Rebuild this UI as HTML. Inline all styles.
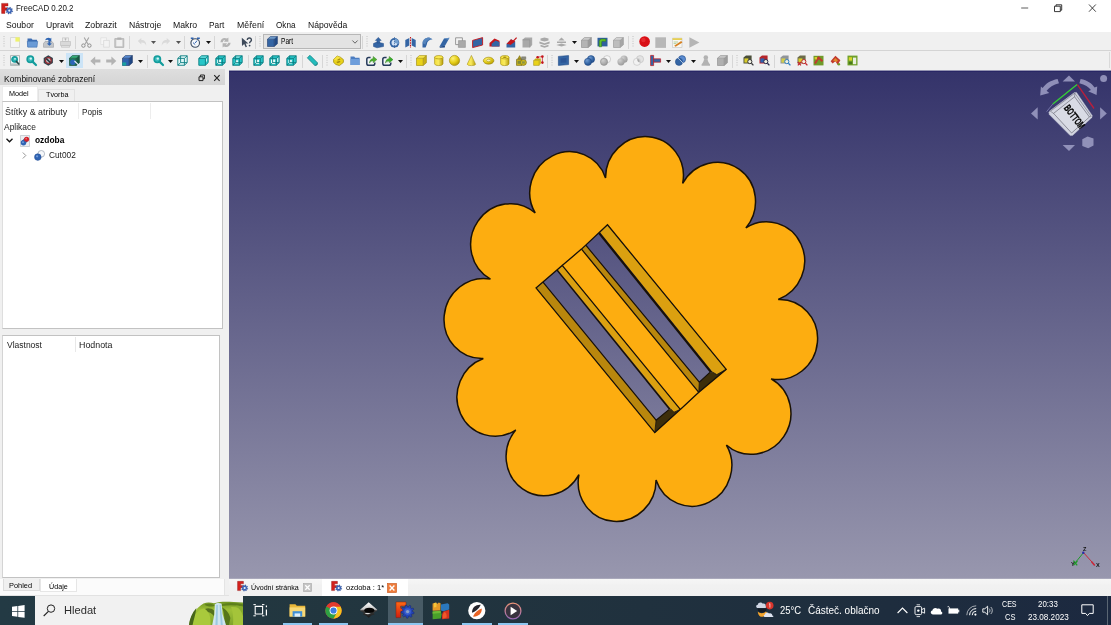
<!DOCTYPE html>
<html><head><meta charset="utf-8"><title>FreeCAD 0.20.2</title>
<style>
html,body{margin:0;padding:0;}
body{width:1111px;height:625px;overflow:hidden;position:relative;background:#f0f0f0;font-family:"Liberation Sans",sans-serif;}
.b{position:absolute;}
.t{position:absolute;white-space:nowrap;transform-origin:0 50%;}
svg{position:absolute;overflow:visible;}
</style></head><body>
<div class="b" style="left:0px;top:0px;width:1111px;height:32px;background:#fff;"></div>
<div class="b" style="left:0px;top:32px;width:1111px;height:38px;background:#f0f0f0;"></div>
<div class="b" style="left:0px;top:50px;width:1111px;height:1px;background:#d4d4d4;"></div>
<div class="b" style="left:0px;top:69px;width:229px;height:527px;background:#f0f0f0;"></div>
<div class="b" style="left:229px;top:579px;width:882px;height:17px;background:linear-gradient(#f6f6f6,#f1f1f1 40%,#f0f0f0);"></div>
<svg style="left:0.8px;top:2.8px" width="13" height="13" viewBox="0 0 13 13">
<path d="M0.6,0.4H7V3H3.9V4.8H6V7.2H3.9V10.4H0.6Z" fill="#d3201c" stroke="#8a1010" stroke-width="0.4"/><path d="M10.80,7.60L11.77,8.09L11.53,8.94L10.45,8.87L10.07,9.37L10.40,10.40L9.64,10.83L8.92,10.02L8.30,10.10L7.81,11.07L6.96,10.83L7.03,9.75L6.53,9.37L5.50,9.70L5.07,8.94L5.88,8.22L5.80,7.60L4.83,7.11L5.07,6.26L6.15,6.33L6.53,5.83L6.20,4.80L6.96,4.37L7.68,5.18L8.30,5.10L8.79,4.13L9.64,4.37L9.57,5.45L10.07,5.83L11.10,5.50L11.53,6.26L10.72,6.98Z" fill="#3a64b8" stroke="#27468a" stroke-width="0.35"/><circle cx="8.3" cy="7.6" r="1.1" fill="#eef2fa"/></svg>
<div class="t" style="left:15.6px;top:2.1px;font-size:9px;line-height:13px;color:#111;transform:scaleX(0.884);">FreeCAD 0.20.2</div>
<svg style="left:1015px;top:0" width="96" height="17" viewBox="0 0 96 17">
<path d="M6.2,8H13.2" stroke="#333" stroke-width="0.8" fill="none"/>
<path d="M39.5,6.2H45.3V11.6H39.5Z M41,6.2V4.8H46.7V10.2H45.3" stroke="#222" stroke-width="0.9" fill="none"/>
<path d="M74,4.5L80.8,11.7 M80.8,4.5L74,11.7" stroke="#222" stroke-width="0.85" fill="none"/></svg>
<div class="t" style="left:5.8px;top:18.8px;font-size:9.3px;line-height:13px;color:#111;transform:scaleX(0.927);">Soubor</div>
<div class="t" style="left:46.0px;top:18.8px;font-size:9.3px;line-height:13px;color:#111;transform:scaleX(0.927);">Upravit</div>
<div class="t" style="left:85.3px;top:18.8px;font-size:9.3px;line-height:13px;color:#111;transform:scaleX(0.944);">Zobrazit</div>
<div class="t" style="left:128.8px;top:18.8px;font-size:9.3px;line-height:13px;color:#111;transform:scaleX(0.930);">Nástroje</div>
<div class="t" style="left:173.3px;top:18.8px;font-size:9.3px;line-height:13px;color:#111;transform:scaleX(0.937);">Makro</div>
<div class="t" style="left:209.3px;top:18.8px;font-size:9.3px;line-height:13px;color:#111;transform:scaleX(0.891);">Part</div>
<div class="t" style="left:236.8px;top:18.8px;font-size:9.3px;line-height:13px;color:#111;transform:scaleX(0.940);">Měření</div>
<div class="t" style="left:276.0px;top:18.8px;font-size:9.3px;line-height:13px;color:#111;transform:scaleX(0.877);">Okna</div>
<div class="t" style="left:307.7px;top:18.8px;font-size:9.3px;line-height:13px;color:#111;transform:scaleX(0.927);">Nápověda</div>
<svg style="left:0;top:0" width="0" height="0"><defs><radialGradient id="yr" cx="0.35" cy="0.3" r="0.75"><stop offset="0" stop-color="#fdf07a"/><stop offset="0.55" stop-color="#e6cf18"/><stop offset="1" stop-color="#b09608"/></radialGradient><linearGradient id="yh" x1="0" y1="0" x2="1" y2="0"><stop offset="0" stop-color="#f3df3a"/><stop offset="0.45" stop-color="#f9ea5e"/><stop offset="1" stop-color="#b89e0c"/></linearGradient><radialGradient id="br" cx="0.35" cy="0.3" r="0.8"><stop offset="0" stop-color="#6f9bd1"/><stop offset="0.6" stop-color="#3465a4"/><stop offset="1" stop-color="#204a87"/></radialGradient><radialGradient id="gr" cx="0.35" cy="0.3" r="0.8"><stop offset="0" stop-color="#d0d0d0"/><stop offset="1" stop-color="#979797"/></radialGradient></defs></svg>
<svg style="left:3.0px;top:35.0px" width="2" height="14" viewBox="0 0 2 14"><path d="M1,1V13" stroke="#b0b0b0" stroke-width="0.8" stroke-dasharray="0.9 1.5"/></svg>
<svg style="left:10.0px;top:36.5px" width="11" height="11" viewBox="0 0 11 11"><path d="M0.5,0.5H9.5V10.5H0.5Z" fill="#f5f5f5" stroke="#d0d0d0" stroke-width="0.8"/><path d="M5.4,0.3H9.7V4.6H5.400Z" fill="#eef26c"/></svg>
<svg style="left:26.6px;top:36.5px" width="11" height="11" viewBox="0 0 11 11"><path d="M0.5,1.5H4.5L5.5,2.8H10V10H0.5Z" fill="#3f6fb4"/><path d="M0.3,4.2H10.7L10,10.2H0.8Z" fill="#6a9bd6" stroke="#3466aa" stroke-width="0.5"/></svg>
<svg style="left:43.0px;top:36.5px" width="11" height="11" viewBox="0 0 11 11"><path d="M0.5,6.5L2,4.5H9L10.5,6.5V10.3H0.5Z" fill="#c3c6ca" stroke="#9a9da2" stroke-width="0.6"/><path d="M2.2,3.2C3,0.8 6,0.2 7.4,1.6L8.3,0.7V4.3H4.7L5.8,3.2C5,2.4 3.6,2.5 2.2,3.2Z M5.4,4V6.6H3.8L6.4,8.8L9,6.6H7.4V4Z" fill="#2d64b3"/></svg>
<svg style="left:60.0px;top:36.5px" width="11" height="11" viewBox="0 0 11 11"><path d="M2.5,0.8H8.5V4.5H2.5Z" fill="#ececec" stroke="#bdbdbd" stroke-width="0.6"/><path d="M0.5,4.5H10.5V8.6H0.5Z" fill="#d9d9d9" stroke="#bcbcbc" stroke-width="0.6"/><path d="M1.5,8.6H9.5V10.3H1.5Z" fill="#e4e4e4" stroke="#b5b5b5" stroke-width="0.5"/><path d="M4.5,2H6.5M5.5,1.5V3.5" stroke="#aaa" stroke-width="0.7"/></svg>
<div class="b" style="left:75px;top:36px;width:1px;height:13px;background:#d6d6d6;"></div>
<svg style="left:81.0px;top:36.5px" width="11" height="11" viewBox="0 0 11 11"><path d="M3.2,0.5L7,7.3M7.8,0.5L4,7.3" stroke="#a3a3a3" stroke-width="1.1" fill="none"/><circle cx="2.4" cy="8.6" r="1.7" fill="none" stroke="#8e8e8e" stroke-width="1"/><circle cx="8.4" cy="8.6" r="1.7" fill="none" stroke="#8e8e8e" stroke-width="1"/></svg>
<svg style="left:99.5px;top:36.5px" width="11" height="11" viewBox="0 0 11 11"><path d="M0.8,0.8H6.5V7.5H0.8Z" fill="#f6f6f6" stroke="#dedede" stroke-width="0.7"/><path d="M3.6,3.4H9.4V10.2H3.6Z" fill="#f3f3f3" stroke="#d6d6d6" stroke-width="0.7"/></svg>
<svg style="left:114.0px;top:36.5px" width="11" height="11" viewBox="0 0 11 11"><path d="M0.8,1.6H9.8V10.4H0.8Z" fill="#c9c9c9" stroke="#a7a7a7" stroke-width="0.7"/><path d="M2.3,3H8.3V9.2H2.3Z" fill="#f0f0f0"/><path d="M3.3,0.5H7.3V2.6H3.3Z" fill="#b0b0b0"/></svg>
<div class="b" style="left:129px;top:36px;width:1px;height:13px;background:#d6d6d6;"></div>
<svg style="left:137.0px;top:36.5px" width="10" height="10" viewBox="0 0 10 10"><path d="M0.8,4L4.3,1V3C7.5,3 9.4,5 9.2,8.8C8.5,6.6 7,5.6 4.3,5.6V7.4Z" fill="#dadada"/></svg>
<svg style="left:151.2px;top:41.0px" width="5" height="3" viewBox="0 0 5 3"><path d="M0,0H5L2.5,3Z" fill="#555"/></svg>
<svg style="left:161.0px;top:36.5px" width="10" height="10" viewBox="0 0 10 10"><path d="M9.2,4L5.7,1V3C2.5,3 0.6,5 0.8,8.8C1.5,6.6 3,5.6 5.7,5.6V7.4Z" fill="#dadada"/></svg>
<svg style="left:176.0px;top:41.0px" width="5" height="3" viewBox="0 0 5 3"><path d="M0,0H5L2.5,3Z" fill="#555"/></svg>
<div class="b" style="left:184px;top:36px;width:1px;height:13px;background:#d6d6d6;"></div>
<svg style="left:190.0px;top:36.5px" width="11" height="11" viewBox="0 0 11 11"><circle cx="5.2" cy="6" r="4.3" fill="#f4f7fb" stroke="#3e4d63" stroke-width="1.1"/><path d="M5.2,6L7,3.6M3,5.6L5.2,7.6" stroke="#2f62b0" stroke-width="1" fill="none"/><path d="M0.8,1.2H3.5M7,1.2H9.8" stroke="#2f62b0" stroke-width="1.4"/></svg>
<svg style="left:206.0px;top:41.0px" width="5" height="3" viewBox="0 0 5 3"><path d="M0,0H5L2.5,3Z" fill="#111"/></svg>
<div class="b" style="left:214px;top:36px;width:1px;height:13px;background:#d6d6d6;"></div>
<svg style="left:220.0px;top:36.5px" width="11" height="11" viewBox="0 0 11 11"><path d="M0.4,5.2C0.6,1.6 4.2,0 7,1.6L8.4,0.4V4.8H3.8L5.2,3.6C4,3 3,3.6 3,5.2Z M10.6,5.8C10.4,9.4 6.8,11 4,9.4L2.6,10.6V6.2H7.2L5.8,7.4C7,8 8,7.4 8,5.8Z" fill="#b4b4b4"/></svg>
<svg style="left:240.5px;top:36.5px" width="11" height="11" viewBox="0 0 11 11"><path d="M0.8,0.8L1,9L3.2,7L4.6,10.3L6,9.7L4.6,6.5H7.4Z" fill="#3e4a5a"/><path d="M6.3,3C6.4,0.4 10.6,0.4 10.4,3.1C10.3,4.6 8.6,4.6 8.6,6.3" fill="none" stroke="#3e4a5a" stroke-width="1.4"/><circle cx="8.6" cy="8.6" r="0.9" fill="#3e4a5a"/></svg>
<div class="b" style="left:255px;top:36px;width:1px;height:13px;background:#d6d6d6;"></div>
<svg style="left:258.5px;top:35.0px" width="2" height="14" viewBox="0 0 2 14"><path d="M1,1V13" stroke="#b0b0b0" stroke-width="0.8" stroke-dasharray="0.9 1.5"/></svg>
<div class="b" style="left:263px;top:34px;width:98px;height:14.6px;background:#e3e3e3;border:1px solid #b7b7b7;box-sizing:border-box;"></div>
<svg style="left:267.0px;top:36.0px" width="11" height="11" viewBox="0 0 11 11"><path d="M0.5,3.2L7.2,3.2L7.2,10.5L0.5,10.5Z" fill="#3465a4"/><path d="M0.5,3.2L3.4,0.6L10.4,0.6L7.2,3.2Z" fill="#729fcf"/><path d="M7.2,3.2L10.4,0.6L10.4,7.8L7.2,10.5Z" fill="#204a87"/><path d="M0.5,3.2H7.2V10.5H0.5ZM0.5,3.2L3.4,0.6H10.4V7.8L7.2,10.5M7.2,3.2L10.4,0.6" fill="none" stroke="#1d3a6e" stroke-width="0.6"/></svg>
<div class="t" style="left:280.6px;top:35.4px;font-size:9.2px;line-height:13px;color:#000;transform:scaleX(0.717);">Part</div>
<svg style="left:351.5px;top:40.2px" width="6" height="4" viewBox="0 0 6 4"><path d="M0.4,0.5L3,3.2L5.6,0.5" fill="none" stroke="#444" stroke-width="0.8"/></svg>
<div class="b" style="left:362px;top:36px;width:1px;height:13px;background:#d6d6d6;"></div>
<svg style="left:365.6px;top:35.0px" width="2" height="14" viewBox="0 0 2 14"><path d="M1,1V13" stroke="#b0b0b0" stroke-width="0.8" stroke-dasharray="0.9 1.5"/></svg>
<svg style="left:372.5px;top:36.5px" width="11" height="11" viewBox="0 0 11 11"><path d="M0.5,6.5L4,5L10.5,6.5V9.5L4,10.8L0.5,9.5Z" fill="#3465a4" stroke="#204a87" stroke-width="0.5"/><path d="M5.3,0.4L8.2,3.4H6.6V6H4V3.4H2.4Z" fill="#3465a4" stroke="#204a87" stroke-width="0.5"/></svg>
<svg style="left:388.6px;top:36.5px" width="11" height="11" viewBox="0 0 11 11"><circle cx="5.5" cy="5.8" r="4.8" fill="#3465a4"/><circle cx="5.5" cy="5.8" r="3" fill="#cfe0f5"/><path d="M5.5,5.8V1.5A4.3,4.3 0 0 1 9.6,7Z" fill="#729fcf"/><path d="M5.5,0V11" stroke="#204a87" stroke-width="0.6" stroke-dasharray="1.2 0.8"/></svg>
<svg style="left:405.0px;top:36.5px" width="11" height="11" viewBox="0 0 11 11"><path d="M0.3,3L4.3,1V8.5L0.3,10.5Z" fill="#3465a4"/><path d="M6.7,1L10.7,3V10.5L6.7,8.5Z" fill="#3465a4"/><path d="M5.5,0V11" stroke="#c4161c" stroke-width="1.1" stroke-dasharray="1.6 1"/></svg>
<svg style="left:422.0px;top:36.5px" width="11" height="11" viewBox="0 0 11 11"><path d="M0.5,10.5V6C0.8,2.6 3.6,0.7 7.2,0.6L10.5,2.2C7.2,2.4 5.2,4 4.8,7.6L3.6,10.5Z" fill="#3465a4"/><path d="M0.5,6C0.8,2.6 3.6,0.7 7.2,0.6L10.5,2.2C6,2.2 3.6,4.2 3.6,7.8Z" fill="#729fcf" opacity="0.55"/></svg>
<svg style="left:439.0px;top:36.5px" width="11" height="11" viewBox="0 0 11 11"><path d="M0.5,9.5L5,1.5L10.5,0.8L6,8.8Z" fill="#3465a4"/><path d="M0.5,9.5L6,8.8L5.8,10.5L0.8,10.8Z" fill="#204a87"/><path d="M5,1.5L10.5,0.8L9.3,2.8Z" fill="#729fcf" opacity="0.7"/></svg>
<svg style="left:455.4px;top:36.5px" width="11" height="11" viewBox="0 0 11 11"><path d="M0.6,0.8H7.4V7.6H0.6Z" fill="#f4f4f4" stroke="#8e8e8e" stroke-width="0.9"/><path d="M3.4,3.6H10.4V10.4H3.4Z" fill="#a9a9a9" stroke="#8e8e8e" stroke-width="0.6"/></svg>
<svg style="left:471.6px;top:36.5px" width="11.5" height="11" viewBox="0 0 11.5 11"><path d="M0.6,3.4L10.6,0.6V8L0.6,10.6Z" fill="#3465a4" stroke="#c4161c" stroke-width="0.9"/></svg>
<svg style="left:489.0px;top:36.5px" width="11" height="11" viewBox="0 0 11 11"><path d="M0.5,6L5.5,1.4L10.5,3.8V9.6H0.5Z" fill="#c4161c"/><path d="M2.6,6.8L6.6,3.6L10.5,5V9.6H2.6Z" fill="#3465a4"/></svg>
<svg style="left:505.5px;top:36.5px" width="11" height="11" viewBox="0 0 11 11"><path d="M0.5,7L5,2.2L9.2,4.6V10.4H0.5Z" fill="#3465a4"/><path d="M0.5,7L5,2.2L9.2,4.6L5,7.4Z" fill="#c4161c"/><path d="M4,7.6L10.6,0.6" stroke="#c4161c" stroke-width="1.3"/></svg>
<svg style="left:522.0px;top:36.5px" width="11" height="11" viewBox="0 0 11 11"><path d="M0.5,2.8L3,0.6H10.2V8L7.8,10.4H0.5Z" fill="#a9a9a9"/><path d="M0.5,2.8H7.8V10.4" fill="none" stroke="#8c8c8c" stroke-width="0.6"/></svg>
<svg style="left:539.0px;top:36.5px" width="11" height="11" viewBox="0 0 11 11"><path d="M1.5,1.6L5.5,0.4L9.5,1.6V3.4L5.5,4.6L1.5,3.4ZM0.4,4.6L5.5,6.2L10.6,4.6V6.4L5.5,8L0.4,6.4ZM1.5,7.8L5.5,9L9.5,7.8V9.6L5.5,10.8L1.5,9.6Z" fill="#a9a9a9"/></svg>
<svg style="left:555.6px;top:36.5px" width="11" height="11" viewBox="0 0 11 11"><path d="M5.5,0.4L8.6,3.4H2.4ZM1,4.6H10V6H1ZM0.3,8L5.5,6.6L10.7,8L5.5,9.6Z" fill="#a9a9a9"/></svg>
<svg style="left:571.5px;top:41.0px" width="5" height="3" viewBox="0 0 5 3"><path d="M0,0H5L2.5,3Z" fill="#111"/></svg>
<svg style="left:581.0px;top:36.5px" width="11" height="11" viewBox="0 0 11 11"><path d="M0.5,3.2L7.2,3.2L7.2,10.5L0.5,10.5Z" fill="#b4b4b4"/><path d="M0.5,3.2L3.4,0.6L10.4,0.6L7.2,3.2Z" fill="#cdcdcd"/><path d="M7.2,3.2L10.4,0.6L10.4,7.8L7.2,10.5Z" fill="#9a9a9a"/><path d="M0.5,3.2H7.2V10.5H0.5ZM0.5,3.2L3.4,0.6H10.4V7.8L7.2,10.5M7.2,3.2L10.4,0.6" fill="none" stroke="#8a8a8a" stroke-width="0.6"/></svg>
<svg style="left:597.0px;top:36.5px" width="11" height="11" viewBox="0 0 11 11"><path d="M0.5,0.8H10.5V9.4H0.5Z" fill="#2f5f9e"/><path d="M2.2,9.8V4.6C2.2,2.4 4,2 5.6,2H8.8V4.2H5.8C4.8,4.2 4.6,4.6 4.6,5.4V9.8Z" fill="#5fbf2a" stroke="#2f7a12" stroke-width="0.5"/></svg>
<svg style="left:613.4px;top:36.5px" width="11" height="11" viewBox="0 0 11 11"><path d="M0.5,3.2L7.2,3.2L7.2,10.5L0.5,10.5Z" fill="#bdbdbd"/><path d="M0.5,3.2L3.4,0.6L10.4,0.6L7.2,3.2Z" fill="#d6d6d6"/><path d="M7.2,3.2L10.4,0.6L10.4,7.8L7.2,10.5Z" fill="#a6a6a6"/><path d="M0.5,3.2H7.2V10.5H0.5ZM0.5,3.2L3.4,0.6H10.4V7.8L7.2,10.5M7.2,3.2L10.4,0.6" fill="none" stroke="#949494" stroke-width="0.6"/></svg>
<div class="b" style="left:628px;top:36px;width:1px;height:13px;background:#d6d6d6;"></div>
<svg style="left:631.8px;top:35.0px" width="2" height="14" viewBox="0 0 2 14"><path d="M1,1V13" stroke="#b0b0b0" stroke-width="0.8" stroke-dasharray="0.9 1.5"/></svg>
<svg style="left:639.2px;top:36.3px" width="11.4" height="11.4" viewBox="0 0 11.4 11.4"><circle cx="5.6" cy="5.6" r="5.3" fill="#d90f16"/><circle cx="4.4" cy="4" r="2.2" fill="#ee3a3f" opacity="0.6"/></svg>
<svg style="left:655.2px;top:36.5px" width="11.3" height="11.2" viewBox="0 0 11.3 11.2"><path d="M0.3,0.3H11V10.9H0.3Z" fill="#b7b7b7"/></svg>
<svg style="left:672.3px;top:36.5px" width="11" height="11" viewBox="0 0 11 11"><path d="M0.5,1.2H10V10.5H0.5Z" fill="#f7f7f2" stroke="#c5c5c0" stroke-width="0.6"/><path d="M0.5,1.2H10V3H0.5Z" fill="#e6cf52"/><path d="M2.2,8.8L9.2,4L10.4,5.4L3.6,9.8Z" fill="#d67f1f"/><path d="M1.6,5H6M1.6,6.6H4.4" stroke="#9bbf7a" stroke-width="0.7"/></svg>
<svg style="left:689.0px;top:36.5px" width="11" height="11" viewBox="0 0 11 11"><path d="M0.4,0.3L10.4,5.5L0.4,10.7Z" fill="#b5b5b5"/></svg>
<svg style="left:3.0px;top:53.5px" width="2" height="14" viewBox="0 0 2 14"><path d="M1,1V13" stroke="#b0b0b0" stroke-width="0.8" stroke-dasharray="0.9 1.5"/></svg>
<svg style="left:10.0px;top:55.0px" width="11" height="11" viewBox="0 0 11 11"><path d="M0.5,0.6H9.5V10.4H0.5Z" fill="#f4f7f7" stroke="#8f9a9a" stroke-width="0.7"/><path d="M0.5,8.4H9.5V10.4H0.5Z" fill="#b9c2c2"/><circle cx="4.6" cy="4.4" r="2.7" fill="#2fb4b4" stroke="#139c9c" stroke-width="1.4"/><circle cx="5" cy="3.8" r="0.9" fill="#d6f6f6"/><path d="M6.4,6.4L8.8,9" stroke="#2a4a4a" stroke-width="1.6" stroke-linecap="round"/></svg>
<svg style="left:26.4px;top:55.0px" width="11" height="11" viewBox="0 0 11 11"><circle cx="4.3" cy="4.3" r="3.2" fill="#3bbcbc" stroke="#139c9c" stroke-width="1.5"/><circle cx="4.8" cy="3.6" r="1.2" fill="#d6f6f6"/><path d="M6.6,6.6L10,10" stroke="#139c9c" stroke-width="2.2" stroke-linecap="round"/></svg>
<svg style="left:43.0px;top:55.0px" width="10.6" height="11" viewBox="0 0 10.6 11"><path d="M5.3,0.3L9.9,2.9V8.1L5.3,10.7L0.7,8.1V2.9Z" fill="#34424c"/><circle cx="5.3" cy="5.5" r="2.9" fill="#b8c2c8" stroke="#9c2a30" stroke-width="1.3"/><path d="M3.3,3.6L7.4,7.5" stroke="#26323a" stroke-width="1.5"/></svg>
<svg style="left:59.4px;top:59.5px" width="5" height="3" viewBox="0 0 5 3"><path d="M0,0H5L2.5,3Z" fill="#111"/></svg>
<div class="b" style="left:66px;top:53px;width:17px;height:15px;background:#cce4f7;"></div>
<svg style="left:69.3px;top:55.0px" width="11" height="11" viewBox="0 0 11 11"><path d="M0.5,3.2L7.2,3.2L7.2,10.5L0.5,10.5Z" fill="#1b7a57"/><path d="M0.5,3.2L3.4,0.6L10.4,0.6L7.2,3.2Z" fill="#36b37e"/><path d="M7.2,3.2L10.4,0.6L10.4,7.8L7.2,10.5Z" fill="#145c42"/><path d="M0.5,3.2H7.2V10.5H0.5ZM0.5,3.2L3.4,0.6H10.4V7.8L7.2,10.5M7.2,3.2L10.4,0.6" fill="none" stroke="#0e3f2d" stroke-width="0.6"/><circle cx="3.8" cy="7.2" r="2.7" fill="#2c66b8"/><path d="M5.5,6L10,10.4" stroke="#e6f0ff" stroke-width="1.1"/></svg>
<svg style="left:89.6px;top:55.5px" width="10.6" height="10" viewBox="0 0 10.6 10"><path d="M0.3,5L5.2,0.6V3.4H10.4V6.6H5.2V9.4Z" fill="#b3b3b3"/></svg>
<svg style="left:106.2px;top:55.5px" width="10.6" height="10" viewBox="0 0 10.6 10"><path d="M10.3,5L5.4,0.6V3.4H0.2V6.6H5.4V9.4Z" fill="#b3b3b3"/></svg>
<svg style="left:122.4px;top:55.0px" width="11.5" height="11" viewBox="0 0 11.5 11"><path d="M0.5,3.2L7.2,3.2L7.2,10.5L0.5,10.5Z" fill="#2f62b0"/><path d="M0.5,3.2L3.4,0.6L10.4,0.6L7.2,3.2Z" fill="#5d8fd6"/><path d="M7.2,3.2L10.4,0.6L10.4,7.8L7.2,10.5Z" fill="#1f4684"/><path d="M0.5,3.2H7.2V10.5H0.5ZM0.5,3.2L3.4,0.6H10.4V7.8L7.2,10.5M7.2,3.2L10.4,0.6" fill="none" stroke="#17335f" stroke-width="0.6"/><path d="M0.3,7.4H4.2V10.6H0.3Z" fill="#1aa0a0"/></svg>
<svg style="left:138.0px;top:59.5px" width="5" height="3" viewBox="0 0 5 3"><path d="M0,0H5L2.5,3Z" fill="#111"/></svg>
<div class="b" style="left:147px;top:54.5px;width:1px;height:13px;background:#d6d6d6;"></div>
<svg style="left:152.6px;top:55.0px" width="11" height="11" viewBox="0 0 11 11"><circle cx="4.3" cy="4.3" r="3.2" fill="#3bbcbc" stroke="#139c9c" stroke-width="1.5"/><circle cx="4.8" cy="3.6" r="1.2" fill="#d6f6f6"/><path d="M6.6,6.6L10,10" stroke="#139c9c" stroke-width="2.2" stroke-linecap="round"/></svg>
<svg style="left:168.0px;top:59.5px" width="5" height="3" viewBox="0 0 5 3"><path d="M0,0H5L2.5,3Z" fill="#111"/></svg>
<svg style="left:177.3px;top:55.0px" width="11" height="11" viewBox="0 0 11 11"><path d="M0.8,3.4L3.6,0.8H10.2V7.6L7.4,10.3H0.8Z" fill="#dff7f7"/><path d="M0.8,3.4H7.4V10.3H0.8ZM0.8,3.4L3.6,0.8H10.2V7.6L7.4,10.3M7.4,3.4L10.2,0.8M3.6,0.8V7.6H10.2M3.6,7.6L0.8,10.3" fill="none" stroke="#0f7f83" stroke-width="0.9"/></svg>
<svg style="left:197.6px;top:55.0px" width="11" height="11" viewBox="0 0 11 11"><path d="M0.8,3.4L3.6,0.8H10.2V7.6L7.4,10.3H0.8Z" fill="#27c6c8"/><path d="M0.8,3.4L3.6,0.8H10.2L7.4,3.4Z" fill="#62e2e2"/><path d="M8.6,3.6V6.6" stroke="#eaffff" stroke-width="0.9"/><path d="M0.8,3.4H7.4V10.3H0.8ZM0.8,3.4L3.6,0.8H10.2V7.6L7.4,10.3M7.4,3.4L10.2,0.8" fill="none" stroke="#0f7f83" stroke-width="0.9"/></svg>
<svg style="left:215.0px;top:55.0px" width="11" height="11" viewBox="0 0 11 11"><path d="M0.8,3.4L3.6,0.8H10.2V7.6L7.4,10.3H0.8Z" fill="#27c6c8"/><path d="M2.2,4.8H6V8.9H2.2Z" fill="#e8fbfb"/><path d="M0.8,3.4H7.4V10.3H0.8ZM0.8,3.4L3.6,0.8H10.2V7.6L7.4,10.3M7.4,3.4L10.2,0.8M3.6,0.8V7.6H10.2M3.6,7.6L0.8,10.3" fill="none" stroke="#0f7f83" stroke-width="0.9"/></svg>
<svg style="left:232.0px;top:55.0px" width="11" height="11" viewBox="0 0 11 11"><path d="M0.8,3.4L3.6,0.8H10.2V7.6L7.4,10.3H0.8Z" fill="#27c6c8"/><path d="M3,5.2H6.2V8.4H3ZM4.4,1.6H8.2L7,2.6H3.4Z" fill="#e8fbfb"/><path d="M0.8,3.4H7.4V10.3H0.8ZM0.8,3.4L3.6,0.8H10.2V7.6L7.4,10.3M7.4,3.4L10.2,0.8M3.6,0.8V7.6H10.2M3.6,7.6L0.8,10.3" fill="none" stroke="#0f7f83" stroke-width="0.9"/></svg>
<div class="b" style="left:248px;top:54.5px;width:1px;height:13px;background:#d6d6d6;"></div>
<svg style="left:252.6px;top:55.0px" width="11" height="11" viewBox="0 0 11 11"><path d="M0.8,3.4L3.6,0.8H10.2V7.6L7.4,10.3H0.8Z" fill="#27c6c8"/><path d="M2.2,4.8H6V8.9H2.2Z" fill="#e8fbfb"/><path d="M0.8,3.4H7.4V10.3H0.8ZM0.8,3.4L3.6,0.8H10.2V7.6L7.4,10.3M7.4,3.4L10.2,0.8M3.6,0.8V7.6H10.2M3.6,7.6L0.8,10.3" fill="none" stroke="#0f7f83" stroke-width="0.9"/></svg>
<svg style="left:269.3px;top:55.0px" width="11" height="11" viewBox="0 0 11 11"><path d="M0.8,3.4L3.6,0.8H10.2V7.6L7.4,10.3H0.8Z" fill="#27c6c8"/><path d="M2,4.6H6.2V9H2ZM8.2,3.4L9.4,2.4V6.8L8.2,8Z" fill="#e8fbfb"/><path d="M0.8,3.4H7.4V10.3H0.8ZM0.8,3.4L3.6,0.8H10.2V7.6L7.4,10.3M7.4,3.4L10.2,0.8M3.6,0.8V7.6H10.2M3.6,7.6L0.8,10.3" fill="none" stroke="#0f7f83" stroke-width="0.9"/></svg>
<svg style="left:286.4px;top:55.0px" width="11" height="11" viewBox="0 0 11 11"><path d="M0.8,3.4L3.6,0.8H10.2V7.6L7.4,10.3H0.8Z" fill="#27c6c8"/><path d="M2.4,5H5.8V8.6H2.4Z" fill="#e8fbfb"/><path d="M0.8,3.4H7.4V10.3H0.8ZM0.8,3.4L3.6,0.8H10.2V7.6L7.4,10.3M7.4,3.4L10.2,0.8M3.6,0.8V7.6H10.2M3.6,7.6L0.8,10.3" fill="none" stroke="#0f7f83" stroke-width="0.9"/></svg>
<div class="b" style="left:302px;top:54.5px;width:1px;height:13px;background:#d6d6d6;"></div>
<svg style="left:307.0px;top:55.0px" width="11" height="11" viewBox="0 0 11 11"><path d="M0.3,2.8L3,0.3L10.7,8L8,10.7Z" fill="#23bcbc" stroke="#0e7d80" stroke-width="0.7"/><path d="M8,10.7L10.7,8L10.7,9.6L9,11Z" fill="#0e7d80"/></svg>
<div class="b" style="left:322px;top:54.5px;width:1px;height:13px;background:#d6d6d6;"></div>
<svg style="left:325.7px;top:53.5px" width="2" height="14" viewBox="0 0 2 14"><path d="M1,1V13" stroke="#b0b0b0" stroke-width="0.8" stroke-dasharray="0.9 1.5"/></svg>
<svg style="left:333.0px;top:55.0px" width="11" height="11" viewBox="0 0 11 11"><path d="M0.6,4.4L4.2,1L7.4,2.2L10.4,4.6V7.4L6.4,10.6L2.6,9.4L0.6,7.2Z" fill="#e9d21a" stroke="#9c8708" stroke-width="0.7"/><path d="M3.6,4.4L6.6,3.4L7.6,4.6L5,5.6ZM3.2,7L6.6,5.8L7.6,7L4.6,8.200Z" fill="#a88e0e"/><path d="M0.6,4.4L4.2,1L7.4,2.2L3.600,5.400Z" fill="#fbe94f" opacity="0.7"/></svg>
<svg style="left:349.8px;top:55.0px" width="10.2" height="11" viewBox="0 0 10.2 11"><path d="M0.5,1.6H4.2L5.2,2.8H9.6V10H0.5Z" fill="#4b7cc0"/><path d="M0.5,4H9.6V10H0.5Z" fill="#6d9ddb"/></svg>
<svg style="left:365.8px;top:55.0px" width="11" height="11" viewBox="0 0 11 11"><path d="M4.6,2.4H2.6C1.4,2.4 0.8,3 0.8,4.200V8.400C0.8,9.600 1.4,10.200 2.6,10.200H7C8.200,10.200 8.800,9.600 8.800,8.400V7.400" fill="#f4f6f8" stroke="#263a5a" stroke-width="1.500"/><path d="M3.400,8.200C3.600,5.400 5,3.800 7.200,3.600V1.400L10.900,4.600L7.200,7.800V5.800C5.600,5.800 4.400,6.600 3.400,8.200Z" fill="#4db02e" stroke="#2a741a" stroke-width="0.400"/></svg>
<svg style="left:382.0px;top:55.0px" width="11" height="11" viewBox="0 0 11 11"><path d="M4.6,2.4H2.6C1.4,2.4 0.8,3 0.8,4.200V8.400C0.8,9.600 1.4,10.200 2.6,10.200H7C8.200,10.200 8.800,9.600 8.800,8.400V7.400" fill="#f4f6f8" stroke="#263a5a" stroke-width="1.500"/><path d="M3.400,8.200C3.600,5.400 5,3.800 7.200,3.600V1.400L10.900,4.600L7.200,7.800V5.800C5.600,5.800 4.400,6.600 3.400,8.200Z" fill="#4db02e" stroke="#2a741a" stroke-width="0.400"/><path d="M5.2,8L6.2,5.2C6.8,4.2 7.6,4 8.4,4V2.6L10.9,4.8L8.4,7V5.6C7.4,5.6 6.4,6.2 5.2,8Z" fill="#35a82e"/></svg>
<svg style="left:398.0px;top:59.5px" width="5" height="3" viewBox="0 0 5 3"><path d="M0,0H5L2.5,3Z" fill="#111"/></svg>
<div class="b" style="left:406px;top:54.5px;width:1px;height:13px;background:#d6d6d6;"></div>
<svg style="left:409.5px;top:53.5px" width="2" height="14" viewBox="0 0 2 14"><path d="M1,1V13" stroke="#b0b0b0" stroke-width="0.8" stroke-dasharray="0.9 1.5"/></svg>
<svg style="left:416.2px;top:55.0px" width="11.4" height="11" viewBox="0 0 11.4 11"><path d="M0.5,3.2L7.2,3.2L7.2,10.5L0.5,10.5Z" fill="#e9d21a"/><path d="M0.5,3.2L3.4,0.6L10.4,0.6L7.2,3.2Z" fill="#fbe94f"/><path d="M7.2,3.2L10.4,0.6L10.4,7.8L7.2,10.5Z" fill="#c9b113"/><path d="M0.5,3.2H7.2V10.5H0.5ZM0.5,3.2L3.4,0.6H10.4V7.8L7.2,10.5M7.2,3.2L10.4,0.6" fill="none" stroke="#9c8708" stroke-width="0.6"/></svg>
<svg style="left:434.0px;top:55.0px" width="9.6" height="11" viewBox="0 0 9.6 11"><path d="M0.6,2.2V8.8A4.2,1.8 0 0 0 9,8.8V2.2Z" fill="url(#yh)" stroke="#9c8708" stroke-width="0.6"/><ellipse cx="4.8" cy="2.2" rx="4.2" ry="1.7" fill="#fbe94f" stroke="#9c8708" stroke-width="0.6"/></svg>
<svg style="left:449.4px;top:55.0px" width="11" height="11" viewBox="0 0 11 11"><circle cx="5.5" cy="5.5" r="5.1" fill="url(#yr)" stroke="#9c8708" stroke-width="0.6"/></svg>
<svg style="left:467.2px;top:55.0px" width="9" height="11" viewBox="0 0 9 11"><path d="M4.4,0.4L8.6,9.2A4.2,1.4 0 0 1 0.2,9.2Z" fill="url(#yh)" stroke="#9c8708" stroke-width="0.5"/></svg>
<svg style="left:482.8px;top:57.0px" width="11.4" height="7.6" viewBox="0 0 11.4 7.6"><ellipse cx="5.6" cy="3.7" rx="5.3" ry="3.5" fill="url(#yr)" stroke="#9c8708" stroke-width="0.6"/><ellipse cx="5.6" cy="3.5" rx="2.2" ry="1.2" fill="#f4ecb0" stroke="#a48c0c" stroke-width="0.5"/></svg>
<svg style="left:500.4px;top:55.0px" width="9.6" height="11" viewBox="0 0 9.6 11"><path d="M0.6,2.2V8.8A4.2,1.8 0 0 0 9,8.8V2.2Z" fill="url(#yh)" stroke="#9c8708" stroke-width="0.6"/><ellipse cx="4.8" cy="2.2" rx="4.2" ry="1.7" fill="#fbe94f" stroke="#9c8708" stroke-width="0.6"/><ellipse cx="4.8" cy="2.2" rx="1.9" ry="0.8" fill="#a38c10"/></svg>
<svg style="left:516.2px;top:55.0px" width="11" height="11" viewBox="0 0 11 11"><path d="M0.5,4.4H6V10.4H0.5Z" fill="#c9b31c" stroke="#6f6208" stroke-width="0.6"/><circle cx="7.4" cy="7.400" r="3" fill="#cdb81f" stroke="#6f6208" stroke-width="0.6"/><path d="M1.6,4L3.6,0.6L5.6,4Z" fill="#a8951a" stroke="#6f6208" stroke-width="0.4"/><path d="M5.6,1.800H9.8V4.400H5.6Z" fill="#8f8f80" stroke="#5a5a50" stroke-width="0.4"/><path d="M1.6,5.800H4.800V8.800H1.6Z" fill="#7f8a3a"/><path d="M6,6.400H8.800V8.600H6Z" fill="#8a9440"/></svg>
<svg style="left:532.8px;top:55.0px" width="11" height="11" viewBox="0 0 11 11"><path d="M0.6,5.4H6.2V10.4H0.6Z" fill="#e9d21a" stroke="#9c8708" stroke-width="0.5"/><path d="M0.6,5.4L2.4,3.6H7.8L6.2,5.4ZM6.2,5.4L7.8,3.6V8.6L6.2,10.4Z" fill="#c9b113"/><circle cx="4.6" cy="2.2" r="1.3" fill="#c4161c"/><circle cx="9.4" cy="1.6" r="1.3" fill="#c4161c"/><circle cx="9.4" cy="7.6" r="1.3" fill="#c4161c"/><path d="M4.6,2.2L9.4,1.6V7.6" fill="none" stroke="#c4161c" stroke-width="0.7"/></svg>
<div class="b" style="left:547px;top:54.5px;width:1px;height:13px;background:#d6d6d6;"></div>
<svg style="left:550.8px;top:53.5px" width="2" height="14" viewBox="0 0 2 14"><path d="M1,1V13" stroke="#b0b0b0" stroke-width="0.8" stroke-dasharray="0.9 1.5"/></svg>
<svg style="left:558.0px;top:55.0px" width="11" height="11" viewBox="0 0 11 11"><path d="M0.4,1.4L10.6,0.6V9.6L0.4,10.4Z" fill="#3465a4" stroke="#204a87" stroke-width="0.6"/><path d="M2.6,3.4L8.4,3V7.4L2.6,7.8Z" fill="#2b5596"/></svg>
<svg style="left:574.2px;top:59.5px" width="5" height="3" viewBox="0 0 5 3"><path d="M0,0H5L2.5,3Z" fill="#111"/></svg>
<svg style="left:584.0px;top:55.0px" width="11" height="11" viewBox="0 0 11 11"><ellipse cx="7" cy="4.2" rx="3.6" ry="3.6" fill="url(#br)" stroke="#204a87" stroke-width="0.6"/><ellipse cx="4" cy="6.8" rx="3.6" ry="3.6" fill="url(#br)" stroke="#204a87" stroke-width="0.6"/></svg>
<svg style="left:600.0px;top:55.0px" width="11" height="11" viewBox="0 0 11 11"><ellipse cx="7" cy="4.2" rx="3.6" ry="3.6" fill="#f6f6f6" stroke="#b5b5b5" stroke-width="0.6"/><ellipse cx="4" cy="6.8" rx="3.6" ry="3.6" fill="url(#gr)" stroke="#8f8f8f" stroke-width="0.6"/></svg>
<svg style="left:616.5px;top:55.0px" width="11" height="11" viewBox="0 0 11 11"><ellipse cx="7" cy="4.2" rx="3.6" ry="3.6" fill="url(#gr)" stroke="none" stroke-width="0.6"/><ellipse cx="4" cy="6.8" rx="3.6" ry="3.6" fill="url(#gr)" stroke="none" stroke-width="0.6"/></svg>
<svg style="left:633.0px;top:55.0px" width="11" height="11" viewBox="0 0 11 11"><ellipse cx="7" cy="4.2" rx="3.6" ry="3.6" fill="#e3e3e3" stroke="#bdbdbd" stroke-width="0.6"/><ellipse cx="4" cy="6.8" rx="3.6" ry="3.6" fill="#f2f2f2" stroke="#bdbdbd" stroke-width="0.6"/><path d="M4.4,3.4A3.6,3.6 0 0 1 6.6,7.6A3.6,3.6 0 0 1 4.4,3.4Z" fill="#a9a9a9"/></svg>
<svg style="left:649.8px;top:55.0px" width="11" height="11" viewBox="0 0 11 11"><path d="M0.6,0.4H3.6V10.6H0.6Z" fill="#3465a4" stroke="#c4161c" stroke-width="0.7"/><path d="M3.6,3.8H10.6V7.2H3.6Z" fill="#3465a4" stroke="#c4161c" stroke-width="0.7"/></svg>
<svg style="left:666.0px;top:59.5px" width="5" height="3" viewBox="0 0 5 3"><path d="M0,0H5L2.5,3Z" fill="#111"/></svg>
<svg style="left:675.0px;top:55.0px" width="11" height="11" viewBox="0 0 11 11"><ellipse cx="7" cy="4.2" rx="3.6" ry="3.6" fill="#5a8bd0" stroke="#204a87" stroke-width="0.6"/><ellipse cx="4" cy="6.8" rx="3.6" ry="3.6" fill="#3465a4" stroke="#204a87" stroke-width="0.6"/><path d="M3,3L8,8" stroke="#dfe9f7" stroke-width="0.7"/></svg>
<svg style="left:691.2px;top:59.5px" width="5" height="3" viewBox="0 0 5 3"><path d="M0,0H5L2.5,3Z" fill="#111"/></svg>
<svg style="left:701.2px;top:55.0px" width="9.6" height="11" viewBox="0 0 9.6 11"><circle cx="4.8" cy="2.500" r="2.300" fill="#b2b2b2"/><path d="M3,4.200C2.800,6.400 1.800,8 0.600,9.200V10.800H9V9.200C7.800,8 6.800,6.400 6.600,4.200Z" fill="#b2b2b2"/></svg>
<svg style="left:717.3px;top:55.0px" width="11" height="11" viewBox="0 0 11 11"><path d="M0.5,3.2L7.2,3.2L7.2,10.5L0.5,10.5Z" fill="#b0b0b0"/><path d="M0.5,3.2L3.4,0.6L10.4,0.6L7.2,3.2Z" fill="#c9c9c9"/><path d="M7.2,3.2L10.4,0.6L10.4,7.8L7.2,10.5Z" fill="#9c9c9c"/><path d="M0.5,3.2H7.2V10.5H0.5ZM0.5,3.2L3.4,0.6H10.4V7.8L7.2,10.5M7.2,3.2L10.4,0.6" fill="none" stroke="#8c8c8c" stroke-width="0.6"/></svg>
<div class="b" style="left:732px;top:54.5px;width:1px;height:13px;background:#d6d6d6;"></div>
<svg style="left:735.8px;top:53.5px" width="2" height="14" viewBox="0 0 2 14"><path d="M1,1V13" stroke="#b0b0b0" stroke-width="0.8" stroke-dasharray="0.9 1.5"/></svg>
<svg style="left:742.5px;top:55.0px" width="11" height="11" viewBox="0 0 11 11"><path d="M0.5,2.6L3,0.6H8.6V6.4L6,8.6H0.5Z" fill="#4a4f3a"/><path d="M1.4,3.4H5.4V7.6H1.4Z" fill="#d9cc2a"/><circle cx="6.8" cy="6.6" r="2.1" fill="#f0f0e0" stroke="#3a3a3a" stroke-width="1"/><path d="M8.4,8.2L10.4,10.4" stroke="#3a3a3a" stroke-width="1.3"/></svg>
<svg style="left:759.2px;top:55.0px" width="11" height="11" viewBox="0 0 11 11"><path d="M0.5,2.6L3,0.6H8.6V6.4L6,8.6H0.5Z" fill="#b5252b"/><path d="M1.4,3.4H5.4V7.6H1.4Z" fill="#2f62b0"/><circle cx="6.8" cy="6.6" r="2.1" fill="#f0f0e0" stroke="#2a2a4a" stroke-width="1"/><path d="M8.4,8.2L10.4,10.4" stroke="#2a2a4a" stroke-width="1.3"/></svg>
<div class="b" style="left:774px;top:54.5px;width:1px;height:13px;background:#d6d6d6;"></div>
<svg style="left:780.3px;top:55.0px" width="11" height="11" viewBox="0 0 11 11"><path d="M0.5,2.6L3,0.6H8.6V6.4L6,8.6H0.5Z" fill="#8f9499"/><path d="M1.4,3.4H5.4V7.6H1.4Z" fill="#d2cc4a"/><circle cx="6.8" cy="6.6" r="2.1" fill="#f0f0e0" stroke="#2f7fc2" stroke-width="1"/><path d="M8.4,8.2L10.4,10.4" stroke="#2f7fc2" stroke-width="1.3"/></svg>
<svg style="left:796.5px;top:55.0px" width="11" height="11" viewBox="0 0 11 11"><path d="M0.5,2.6L3,0.6H8.6V6.4L6,8.6H0.5Z" fill="#6b6b4a"/><path d="M1.4,3.4H5.4V7.6H1.4Z" fill="#d9cc2a"/><circle cx="6.8" cy="6.6" r="2.1" fill="#f0f0e0" stroke="#c2272d" stroke-width="1"/><path d="M8.4,8.2L10.4,10.4" stroke="#c2272d" stroke-width="1.3"/><path d="M0.8,7L4,10.4M4,7L0.8,10.4" stroke="#c2272d" stroke-width="1.1"/></svg>
<svg style="left:813.2px;top:55.0px" width="11" height="11" viewBox="0 0 11 11"><path d="M0.5,0.8H10.5V10.4H0.5Z" fill="#6f9a2a"/><path d="M2,8.6L5.6,2.6L9.4,6.2" fill="none" stroke="#c2392d" stroke-width="2"/><path d="M1.6,2H4V4.4H1.6Z" fill="#d9cc2a"/></svg>
<svg style="left:830.2px;top:55.0px" width="11" height="11" viewBox="0 0 11 11"><path d="M0.6,6.2L5.4,0.8L10.4,5.2L7.6,9.8L5.4,6.2L2.6,8.6Z" fill="#c2392d"/><path d="M3,5.6L5.4,3L7.8,5.2L6.8,7Z" fill="#e08a2a"/><circle cx="8.8" cy="9.2" r="1.3" fill="#6f9a2a"/></svg>
<svg style="left:847.0px;top:55.0px" width="11" height="11" viewBox="0 0 11 11"><path d="M0.5,0.6H10.5V10.4H0.5Z" fill="#6fa02a"/><path d="M1.8,2.2H5V5.6H1.8Z" fill="#d9d42a"/><path d="M6,2.6H9.2V9.2H6Z" fill="#e9efdf"/><path d="M1.8,6.8H5V9.2H1.8Z" fill="#4a7a1a"/></svg>
<div class="b" style="left:1109px;top:52px;width:1px;height:16px;background:#d9d9d9;"></div>
<div class="b" style="left:0px;top:69px;width:225px;height:15.8px;background:linear-gradient(#dedede,#d5d5d5);"></div>
<div class="t" style="left:3.9px;top:73.0px;font-size:9.2px;line-height:13px;color:#111;transform:scaleX(0.920);">Kombinované zobrazení</div>
<svg style="left:198.3px;top:73.4px" width="24" height="10" viewBox="0 0 24 10">
<path d="M1,3.8H5V7.6H1ZM2.4,3.8V2H6.4V5.8H5" fill="none" stroke="#222" stroke-width="1"/>
<path d="M16.2,2.2L21.6,7.8M21.6,2.2L16.2,7.8" stroke="#222" stroke-width="1.1"/></svg>
<div class="b" style="left:2px;top:101px;width:221px;height:1px;background:#c8c8c8;"></div>
<div class="b" style="left:2px;top:86px;width:36px;height:16px;background:#fff;border:1px solid #ececec;border-bottom:none;box-sizing:border-box;"></div>
<div class="b" style="left:38px;top:88.5px;width:37px;height:12.5px;background:#f0f0f0;border:1px solid #e2e2e2;border-bottom:none;box-sizing:border-box;"></div>
<div class="t" style="left:8.6px;top:87.9px;font-size:7.6px;line-height:11px;color:#000;transform:scaleX(0.952);">Model</div>
<div class="t" style="left:45.8px;top:88.9px;font-size:7.6px;line-height:11px;color:#000;transform:scaleX(0.947);">Tvorba</div>
<div class="b" style="left:2px;top:101px;width:221px;height:228px;background:#fff;border:1px solid #c2c2c2;border-left-color:#dedede;box-sizing:border-box;"></div>
<div class="b" style="left:78px;top:103px;width:1px;height:16px;background:#ededed;"></div>
<div class="b" style="left:150px;top:103px;width:1px;height:16px;background:#ededed;"></div>
<div class="t" style="left:4.8px;top:105.5px;font-size:9.2px;line-height:13px;color:#1a1a1a;transform:scaleX(0.966);">Štítky &amp; atributy</div>
<div class="t" style="left:81.6px;top:105.5px;font-size:9.2px;line-height:13px;color:#1a1a1a;transform:scaleX(0.886);">Popis</div>
<div class="t" style="left:4.3px;top:120.5px;font-size:9.2px;line-height:13px;color:#1a1a1a;transform:scaleX(0.920);">Aplikace</div>
<svg style="left:6px;top:137.5px" width="7" height="5" viewBox="0 0 7 5"><path d="M0.5,0.8L3.5,3.8L6.5,0.8" fill="none" stroke="#111" stroke-width="1.3"/></svg>
<svg style="left:20px;top:134.5px" width="10" height="12" viewBox="0 0 10 12">
<path d="M0.5,0.5H9.5V11.5H0.5Z" fill="#eceff3" stroke="#b9bec6" stroke-width="0.7"/>
<path d="M1.4,6.4L5.400,2.400L8.400,5.400L4.400,9.400Z" fill="#25427a"/><circle cx="3.500" cy="7.800" r="2.700" fill="#2f63b3"/><circle cx="3" cy="7.200" r="1" fill="#6f9ad8"/>
<circle cx="6.600" cy="4.200" r="2.500" fill="#d3212a"/><circle cx="6.200" cy="3.600" r="0.900" fill="#ee6a6a"/></svg>
<div class="t" style="left:35.0px;top:134.2px;font-size:9.2px;line-height:13px;color:#000;font-weight:bold;transform:scaleX(0.913);">ozdoba</div>
<svg style="left:21.5px;top:151.5px" width="5" height="7" viewBox="0 0 5 7"><path d="M0.8,0.5L3.8,3.5L0.8,6.5" fill="none" stroke="#8a8a8a" stroke-width="0.9"/></svg>
<svg style="left:33.5px;top:149.5px" width="11" height="11" viewBox="0 0 11 11">
<path d="M1.6,4.6L5,1.2L9.800,6L6.400,9.400Z" fill="#dfe4ea"/>
<circle cx="7.300" cy="3.800" r="3.300" fill="#f5f7fa" stroke="#9aa3b0" stroke-width="0.700"/>
<circle cx="3.800" cy="7.100" r="3.300" fill="#2f63b3" stroke="#254f92" stroke-width="0.500"/><circle cx="3.100" cy="6.300" r="1.100" fill="#6f9ad8"/></svg>
<div class="t" style="left:49.2px;top:148.7px;font-size:9.2px;line-height:13px;color:#1a1a1a;transform:scaleX(0.903);">Cut002</div>
<div class="b" style="left:2px;top:335px;width:218px;height:243px;background:#fff;border:1px solid #c2c2c2;border-left-color:#d4d4d4;box-sizing:border-box;"></div>
<div class="b" style="left:75px;top:337px;width:1px;height:15px;background:#e8e8e8;"></div>
<div class="t" style="left:6.5px;top:338.9px;font-size:9.2px;line-height:13px;color:#1a1a1a;transform:scaleX(0.925);">Vlastnost</div>
<div class="t" style="left:78.8px;top:338.9px;font-size:9.2px;line-height:13px;color:#1a1a1a;transform:scaleX(0.963);">Hodnota</div>
<div class="b" style="left:0px;top:579px;width:224px;height:16.5px;background:#fbfbfb;"></div>
<div class="b" style="left:0px;top:594.6px;width:229px;height:1.4px;background:#e2e2e2;"></div>
<div class="b" style="left:224px;top:579px;width:1px;height:16px;background:#e4e4e4;"></div>
<div class="b" style="left:3px;top:579px;width:37px;height:12.4px;background:#f0f0f0;border:1px solid #dddddd;border-top:none;box-sizing:border-box;"></div>
<div class="b" style="left:40px;top:579px;width:36.7px;height:13.4px;background:#fff;border:1px solid #e6e6e6;border-top:none;box-sizing:border-box;"></div>
<div class="t" style="left:9.3px;top:579.7px;font-size:7.6px;line-height:11px;color:#000;transform:scaleX(0.972);">Pohled</div>
<div class="t" style="left:49.2px;top:580.7px;font-size:7.6px;line-height:11px;color:#000;transform:scaleX(0.947);">Údaje</div>
<svg style="left:0;top:0" width="1111" height="625" viewBox="0 0 1111 625">
<defs><linearGradient id="bg" gradientUnits="userSpaceOnUse" x1="0" y1="70.8" x2="0" y2="578.8"><stop offset="0" stop-color="#34336a"/><stop offset="1" stop-color="#9897ae"/></linearGradient></defs>
<rect x="229" y="70.8" width="882" height="508.0" fill="url(#bg)"/>
<rect x="229" y="70.7" width="882" height="0.8" fill="#1c1b60"/>
<path d="M145.55,51.83A40.2,40.2 0 1 1 100.13,117.66A40.2,40.2 0 1 1 27.89,151.96A40.2,40.2 0 1 1 -51.83,145.55A40.2,40.2 0 1 1 -117.66,100.13A40.2,40.2 0 1 1 -151.96,27.89A40.2,40.2 0 1 1 -145.55,-51.83A40.2,40.2 0 1 1 -100.13,-117.66A40.2,40.2 0 1 1 -27.89,-151.96A40.2,40.2 0 1 1 51.83,-145.55A40.2,40.2 0 1 1 117.66,-100.13A40.2,40.2 0 1 1 151.96,-27.89A40.2,40.2 0 1 1 145.55,51.83Z" transform="translate(630.8,329.0) rotate(20.0) scale(0.964,1) rotate(-20.0)" fill="#fdad10" stroke="#1a1206" stroke-width="1.5" stroke-linejoin="miter" vector-effect="non-scaling-stroke"/>
<path d="M562.2,265.4L581.5,249.1M680.3,409.4L698.8,392.3" stroke="#171008" stroke-width="1.3"/><polygon points="536.0,287.9 562.2,265.4 680.3,409.4 654.8,432.6" fill="url(#bg)"/><polygon points="654.8,432.6 656.1,420.1 668.9,409.6 670.9,409.2 674.0,412.2 680.3,409.4" fill="#3d2e0a"/><polygon points="536.0,287.9 543.0,282.2 656.1,420.1 654.8,432.6" fill="#b9870d"/><polygon points="557.5,269.4 562.2,265.4 680.3,409.4 674.0,412.2 670.9,409.2" fill="#dba010"/><polygon points="556.3,270.3 557.5,269.4 670.9,409.2 668.9,409.6" fill="#171008"/><path d="M543.0,282.2L656.1,420.1L668.9,409.6" fill="none" stroke="#171008" stroke-width="1.2"/><path d="M670.9,409.2L674.0,412.2L680.3,409.4M654.8,432.6L656.1,420.1" fill="none" stroke="#171008" stroke-width="0.8"/><polygon points="536.0,287.9 562.2,265.4 680.3,409.4 654.8,432.6" fill="none" stroke="#171008" stroke-width="1.3" stroke-linejoin="miter"/><polygon points="581.5,249.1 607.5,224.8 726.2,369.3 698.8,392.3" fill="url(#bg)"/><polygon points="698.8,392.3 699.3,382.2 709.9,372.4 712.4,372.0 716.8,374.6 726.2,369.3" fill="#3d2e0a"/><polygon points="581.5,249.1 585.8,245.2 699.3,382.2 698.8,392.3" fill="#b9870d"/><polygon points="600.1,232.4 607.5,224.8 726.2,369.3 716.8,374.6 712.4,372.0" fill="#dba010"/><polygon points="598.3,233.8 600.1,232.4 712.4,372.0 709.9,372.4" fill="#171008"/><path d="M585.8,245.2L699.3,382.2L709.9,372.4" fill="none" stroke="#171008" stroke-width="1.2"/><path d="M712.4,372.0L716.8,374.6L726.2,369.3M698.8,392.3L699.3,382.2" fill="none" stroke="#171008" stroke-width="0.8"/><polygon points="581.5,249.1 607.5,224.8 726.2,369.3 698.8,392.3" fill="none" stroke="#171008" stroke-width="1.3" stroke-linejoin="miter"/>
</svg>
<svg style="left:1020px;top:70px" width="91" height="90" viewBox="1020 70 91 90">
<g fill="#a3a3c9" opacity="0.82">
<path d="M1062.6,81.6L1069,75.6L1075,81.6Z"/>
<path d="M1062.6,145L1069,151.1L1075,145Z"/>
<path d="M1037.7,107.2L1031,113.6L1037.7,119.6Z"/>
<path d="M1100.1,107.2L1106.8,113.6L1100.1,119.6Z"/>
<circle cx="1103.6" cy="78.4" r="3.5"/>
<path d="M1057.6,79C1050.6,80.4 1045.6,83.6 1042.6,88L1040.9,86.6L1040.2,95.4L1049.2,93.1L1046.6,90.8C1049,87.4 1053.4,84.6 1059,83.2Z"/>
<path d="M1080.6,79C1087.6,80.4 1091.6,83.2 1094.6,87.6L1097.2,86.4L1096.6,95L1088.2,91.2L1091,90C1088.8,87 1085,84.6 1079.4,83.2Z"/>
<path d="M1082.3,139.2L1087.6,136.4L1093.5,138.6V145.6L1088.2,148.2L1082.3,146Z"/>
</g>
<path d="M1049,112.2L1050.2,110.6L1074.4,92.6L1076.6,92.6L1092.2,115.4L1092,117.4L1072.6,135.4L1070.2,135.6L1049.2,114.4Z" fill="#d3d5e1" stroke="#b4b6c8" stroke-width="0.5"/>
<path d="M1053.6,113.4L1074.6,96.8L1089.4,117L1071.6,133Z" fill="#d9dbe5" stroke="#32323c" stroke-width="0.45"/>
<path d="M1050.4,111.2L1074.8,93.2L1091.2,116.4" fill="none" stroke="#3c3c48" stroke-width="0.4"/>
<path d="M1050.4,111.2L1053.6,113.4M1074.8,93.2L1074.6,96.8M1091.2,116.4L1089.4,117" stroke="#3c3c48" stroke-width="0.4"/>
<path d="M1052.8,104L1077.1,84.5" stroke="#35d235" stroke-width="1.3"/>
<path d="M1077.4,84.6L1094,108.5" stroke="#b81f3c" stroke-width="1.4"/>
<path d="M1052.8,104L1046.6,111.7" stroke="#8a8abf" stroke-width="0.7"/>
<text style="filter:grayscale(1)" transform="translate(1063.6,108.2) rotate(53) scale(0.6,1)" font-family="Liberation Sans, sans-serif" font-weight="bold" font-size="10.4" fill="#050505" stroke="#050505" stroke-width="0.3">BOTTOM</text>
</svg>
<svg style="left:1068px;top:544px" width="36" height="28" viewBox="1068 544 36 28">
<path d="M1083.5,552.6L1075.4,562.6" stroke="#1f9a2a" stroke-width="1"/>
<path d="M1083.5,552.6L1093.4,563.6" stroke="#c8283a" stroke-width="1"/>
<circle cx="1083.3" cy="552.8" r="1.2" fill="#2a2ab0"/>
<path d="M1073.4,560.6L1077.2,565.4M1077.4,561L1073.6,565" stroke="#1f9a2a" stroke-width="1.3"/>
<path d="M1091.6,561.8L1094.8,565.6" stroke="#c8283a" stroke-width="1.6"/>
<text style="filter:grayscale(1)" x="1083" y="551.4" font-family="Liberation Sans, sans-serif" font-weight="bold" font-size="5.6" fill="#111">Z</text>
<text style="filter:grayscale(1)" x="1096" y="566.8" font-family="Liberation Sans, sans-serif" font-weight="bold" font-size="5.6" fill="#111">X</text>
<text style="filter:grayscale(1)" x="1071" y="565.6" font-family="Liberation Sans, sans-serif" font-weight="bold" font-size="5.6" fill="#111">Y</text>
</svg>
<svg style="left:237px;top:581px" width="12.0" height="12.0" viewBox="0 0 13 13">
<path d="M0.6,0.4H7V3H3.9V4.8H6V7.2H3.9V10.4H0.6Z" fill="#d3201c" stroke="#8a1010" stroke-width="0.4"/><path d="M10.80,7.60L11.77,8.09L11.53,8.94L10.45,8.87L10.07,9.37L10.40,10.40L9.64,10.83L8.92,10.02L8.30,10.10L7.81,11.07L6.96,10.83L7.03,9.75L6.53,9.37L5.50,9.70L5.07,8.94L5.88,8.22L5.80,7.60L4.83,7.11L5.07,6.26L6.15,6.33L6.53,5.83L6.20,4.80L6.96,4.37L7.68,5.18L8.30,5.10L8.79,4.13L9.64,4.37L9.57,5.45L10.07,5.83L11.10,5.50L11.53,6.26L10.72,6.98Z" fill="#3a64b8" stroke="#27468a" stroke-width="0.35"/><circle cx="8.3" cy="7.6" r="1.1" fill="#eef2fa"/></svg>
<div class="t" style="left:251.2px;top:581.7px;font-size:7.8px;line-height:11px;color:#000;transform:scaleX(0.911);">Úvodní stránka</div>
<svg style="left:303px;top:582.5px" width="9" height="9" viewBox="0 0 9 9"><rect x="0.4" y="0.4" width="8.2" height="8.2" fill="#c4c4c4" stroke="#a9a9a9" stroke-width="0.6"/><path d="M2.3,2.3L6.7,6.7M6.7,2.3L2.3,6.7" stroke="#fff" stroke-width="1.3"/></svg>
<div class="b" style="left:322px;top:578.6px;width:85.5px;height:17.4px;background:#fff;"></div>
<svg style="left:331px;top:581px" width="12.0" height="12.0" viewBox="0 0 13 13">
<path d="M0.6,0.4H7V3H3.9V4.8H6V7.2H3.9V10.4H0.6Z" fill="#d3201c" stroke="#8a1010" stroke-width="0.4"/><path d="M10.80,7.60L11.77,8.09L11.53,8.94L10.45,8.87L10.07,9.37L10.40,10.40L9.64,10.83L8.92,10.02L8.30,10.10L7.81,11.07L6.96,10.83L7.03,9.75L6.53,9.37L5.50,9.70L5.07,8.94L5.88,8.22L5.80,7.60L4.83,7.11L5.07,6.26L6.15,6.33L6.53,5.83L6.20,4.80L6.96,4.37L7.68,5.18L8.30,5.10L8.79,4.13L9.64,4.37L9.57,5.45L10.07,5.83L11.10,5.50L11.53,6.26L10.72,6.98Z" fill="#3a64b8" stroke="#27468a" stroke-width="0.35"/><circle cx="8.3" cy="7.6" r="1.1" fill="#eef2fa"/></svg>
<div class="t" style="left:346.0px;top:581.7px;font-size:7.8px;line-height:11px;color:#000;transform:scaleX(0.968);">ozdoba : 1*</div>
<svg style="left:387px;top:582.5px" width="10" height="10" viewBox="0 0 10 10"><rect x="0.4" y="0.4" width="9.2" height="9.2" fill="#ee7d3c" stroke="#c85a22" stroke-width="0.6"/><path d="M2.6,2.6L7.4,7.4M7.4,2.6L2.6,7.4" stroke="#fff" stroke-width="1.4"/></svg>
<div class="b" style="left:0px;top:596px;width:1111px;height:29px;background:linear-gradient(90deg,#233a44 0%,#22363f 30%,#20313e 58%,#1e2d3e 80%,#1c2940 100%);"></div>
<svg style="left:12px;top:604.5px" width="13" height="13" viewBox="0 0 13 13"><path d="M0,1.8L5.4,1V6H0ZM6.2,0.9L12.6,0V6H6.2ZM0,6.8H5.4V11.8L0,11ZM6.2,6.8H12.6V12.8L6.2,11.9Z" fill="#fff"/></svg>
<div class="b" style="left:34.5px;top:596px;width:208.7px;height:29px;background:#f1f1f1;"></div>
<svg style="left:43px;top:604px" width="13" height="13" viewBox="43 604 13 13"><circle cx="51" cy="608.600" r="3.700" fill="none" stroke="#222" stroke-width="1"/><path d="M48.400,611.300L43.700,616" stroke="#222" stroke-width="1.100"/></svg>
<div class="t" style="left:63.6px;top:603.1px;font-size:10.4px;line-height:15px;color:#2b2b2b;transform:scaleX(1.071);">Hledat</div>
<svg style="left:188px;top:596px;filter:blur(0.35px)" width="56" height="29" viewBox="188 596 56 29">
<defs><linearGradient id="hg" x1="0" y1="0" x2="0" y2="1"><stop offset="0" stop-color="#6f9422"/><stop offset="0.35" stop-color="#9fc038"/><stop offset="1" stop-color="#7ea42a"/></linearGradient></defs>
<path d="M189,625C190,617 195.5,608.5 203.5,603.6C207,602 211,602.6 214,603.2L220,602C226,601.6 234,602 243,602.6V625Z" fill="url(#hg)"/>
<path d="M204.5,604.4C208,603 212.5,603.6 215,605.4C213,607 207,606.8 204.5,604.4ZM222,604C228,602.6 236,603 243,604.2V606.4C236,605.2 228,605 222,606Z" fill="#5d7f1c"/>
<path d="M205,609C208,607.6 212,608.4 214,610.6V616C211,612.6 208,611.4 205,612.4Z" fill="#54721c"/>
<path d="M222,607.4C225,608.6 229,612 230.4,618L229,625H224C225,619 224,612 222,607.4Z" fill="#56761b"/>
<path d="M192,621C194,614 199,609.4 204,608.6C209,611 211,617 210.6,625H190.6Z" fill="#a9c93c"/>
<path d="M231,607C236,606.4 240.6,608.6 243,612V625H233C233.6,618 233,612 231,607Z" fill="#a4c43a"/>
<path d="M236,605.6C239,605.6 241.6,606.4 243,607.6V616C241.6,611.6 239,608 236,605.6Z" fill="#86ab2c"/>
<path d="M214.8,604.2C216,603 220,602.6 221.6,603.8L222.6,614L226,625H212.2L214.4,614Z" fill="#cfe5ef"/>
<path d="M216.4,605L215.4,625H217.6L217.8,605ZM219.6,605L220.8,625H222.8L220.8,605Z" fill="#9cc9e0"/>
<path d="M189,625C189.6,619 192,612.6 196.4,608C195.6,614 193.6,620 192.6,625Z" fill="#46651a"/>
</svg>
<svg style="left:253px;top:603px" width="15" height="15" viewBox="0 0 15 15">
<path d="M2.2,3.4H9.6V11H2.2Z" fill="none" stroke="#fff" stroke-width="1.1"/><path d="M0.4,1.6H2.8M0.4,12.8H2.8M9,1.6H11.4M9,12.8H11.4" stroke="#fff" stroke-width="1"/>
<path d="M13.4,2.4V4.2M13.4,6.6V12.6" stroke="#fff" stroke-width="1.2"/></svg>
<svg style="left:289px;top:602.5px" width="17" height="15" viewBox="0 0 17 15">
<path d="M0.6,1.2H6.4L7.8,2.8H16.2V13.6H0.6Z" fill="#e9b73a"/><path d="M0.6,4.4H16.2V13.6H0.6Z" fill="#f8d876"/>
<path d="M3.6,8.2H13.2V13.6H3.6Z" fill="#3f8fd6"/><path d="M5.6,10.4H11.2V13.6H5.6Z" fill="#dfeefa"/></svg>
<svg style="left:324.5px;top:602px" width="17" height="17" viewBox="0 0 17 17">
<circle cx="8.5" cy="8.5" r="8.2" fill="#e33b2e"/>
<path d="M8.5,8.5L1.4,4.4A8.2,8.2 0 0 0 8.5,16.7L12,10.6Z" fill="#2ea043"/>
<path d="M8.5,8.5L12,10.6L8.5,16.7A8.2,8.2 0 0 0 15.6,4.4H8.5Z" fill="#f6c31c"/>
<path d="M1.4,4.4A8.2,8.2 0 0 1 15.6,4.4H8.5Z" fill="#e33b2e"/>
<circle cx="8.5" cy="8.5" r="3.9" fill="#fff"/><circle cx="8.5" cy="8.5" r="3.1" fill="#3b7de0"/></svg>
<svg style="left:359px;top:601px" width="20" height="18" viewBox="359 601 20 18">
<defs><linearGradient id="ik" x1="0" y1="0" x2="0" y2="1"><stop offset="0" stop-color="#ffffff"/><stop offset="0.45" stop-color="#c9c9c9"/><stop offset="0.55" stop-color="#3a3a3a"/><stop offset="1" stop-color="#1a1a1a"/></linearGradient></defs>
<path d="M368.7,602.2L377,609.6C377.6,610.4 377,611.2 376,611.4L373.6,613L374.6,614.6L371.4,615.4L368.7,617.8L366,615.4L362.8,614.6L363.8,613L361.4,611.4C360.400,611.2 359.800,610.4 360.400,609.6Z" fill="url(#ik)"/>
<ellipse cx="369.3" cy="610.3" rx="5" ry="2.5" fill="#050505"/>
<path d="M364.600,613.4C366.600,612.600 369.600,612.800 371,613.600C369,614.400 366.200,614.400 364.600,613.400Z" fill="#d9d9d9"/>
</svg>
<div class="b" style="left:388px;top:596px;width:35px;height:29px;background:#485b66;"></div>
<svg style="left:394px;top:600px" width="22" height="20" viewBox="394 600 22 20">
<defs><linearGradient id="ff" x1="0" y1="0" x2="0" y2="1"><stop offset="0" stop-color="#ff6a14"/><stop offset="1" stop-color="#d01c10"/></linearGradient></defs>
<path d="M396,602H406V606H400.600V608.200H404.200V611.800H400.600V617.600H396Z" fill="url(#ff)" stroke="#8a1c0a" stroke-width="0.500"/>
<path d="M412.60,611.60L414.15,612.43L413.80,613.86L412.05,613.89L411.43,614.81L412.08,616.44L410.90,617.32L409.54,616.21L408.47,616.52L407.92,618.19L406.45,618.10L406.12,616.38L405.10,615.93L403.61,616.86L402.54,615.84L403.40,614.31L402.90,613.31L401.16,613.06L401.00,611.60L402.64,610.97L402.90,609.89L401.73,608.58L402.54,607.36L404.20,607.93L405.10,607.27L405.04,605.52L406.45,605.10L407.36,606.61L408.47,606.68L409.55,605.30L410.90,605.88L410.62,607.62L411.43,608.39L413.15,608.02L413.80,609.34L412.48,610.49Z" fill="#2444b4" stroke="#15256e" stroke-width="0.500"/>
<circle cx="407.600" cy="611.600" r="3.300" fill="#3a5fd0"/>
<circle cx="407.600" cy="611.600" r="1.700" fill="#8aa0c8"/></svg>
<svg style="left:432px;top:601.5px" width="18" height="18" viewBox="0 0 18 18">
<path d="M0.6,1.4L4,0.6L5,2L6.800,0.600L8.600,1.200L8.400,8.400L0.600,8.800Z" fill="#e59a27"/><path d="M2,1L4.600,0.800L4.400,5L2,5.400Z" fill="#f2c43a"/>
<path d="M9,2.400L15.600,1.200L17.200,2.600V7.400L11.400,9.200L9,8.400Z" fill="#2b78bd"/>
<path d="M0.600,9.400L8.600,8.800L9.600,12.600L8.800,16.600L0.600,17.200Z" fill="#49a02a"/><path d="M0.600,9.400L8.600,8.800V11L0.600,11.800Z" fill="#6dbb35"/>
<path d="M11.400,9.400L17.200,7.800V16.400L10.200,17.200C9.600,14.400 9.800,11.600 11.400,9.400Z" fill="#d6321d"/><path d="M12.400,10C14,10.400 15,12.400 14.600,15.600L11,16.400C10.600,13.600 11,11.400 12.400,10Z" fill="#ee5a2a"/>
</svg>
<svg style="left:468px;top:602px" width="18" height="18" viewBox="0 0 18 18">
<circle cx="8.800" cy="8.700" r="8.600" fill="#fff"/>
<path d="M12.800,2.800C8,2.400 3.800,5.400 4,10.800C7,9.800 11,7.200 12.800,2.800Z" fill="#24242c"/>
<path d="M5,14.600C9.800,15 14,12 13.800,6.600C10.800,7.600 6.800,10.200 5,14.600Z" fill="#ea6424"/></svg>
<svg style="left:503.600px;top:601.700px" width="18" height="18" viewBox="0 0 18 18">
<defs><linearGradient id="pr" x1="0" y1="0" x2="0" y2="1"><stop offset="0" stop-color="#ec9478"/><stop offset="1" stop-color="#9668b4"/></linearGradient></defs>
<circle cx="9" cy="9" r="7.900" fill="#38333f" stroke="url(#pr)" stroke-width="1.300"/><path d="M6.600,4.800L13.200,9L6.600,13.200Z" fill="#fff"/></svg>
<div class="b" style="left:283px;top:622.6px;width:29.3px;height:2.4px;background:#8cc6f0;"></div>
<div class="b" style="left:318.6px;top:622.6px;width:29.7px;height:2.4px;background:#8cc6f0;"></div>
<div class="b" style="left:388px;top:622.6px;width:35px;height:2.4px;background:#8cc6f0;"></div>
<div class="b" style="left:462.3px;top:622.6px;width:29.7px;height:2.4px;background:#8cc6f0;"></div>
<div class="b" style="left:498.3px;top:622.6px;width:30.0px;height:2.4px;background:#8cc6f0;"></div>
<svg style="left:754px;top:600px" width="22" height="20" viewBox="754 600 22 20">
<path d="M758,608C755.600,608 755.600,605 757.800,604.800C758,602.400 761.400,601.600 762.600,603.600C764.600,602.800 766.200,604.400 765.600,606C766.400,606.600 766,608 765,608Z" fill="#cfd6e4"/>
<path d="M757.600,608.400H766.600C766.800,611.200 764.600,612.600 762.200,612.600C759.800,612.600 757.600,611.200 757.600,608.400Z" fill="#131a24"/>
<path d="M757.800,611.600C759.600,613.600 763.600,613.800 765.800,611.600L767,612.400C766,615.800 762.800,617.400 760.200,616.400C758.600,615.600 757.800,613.600 757.800,611.600Z" fill="#f2a32c"/>
<path d="M765,617C763.200,617 763.200,614.600 765,614.400C765.200,612.400 768,611.800 769,613.400C770.800,612.600 772.600,614 772.200,615.400C773.800,615.400 773.800,617 772.600,617Z" fill="#dfe5f2"/>
<circle cx="769.700" cy="605.600" r="3.800" fill="#d9352c"/><path d="M769,604.400L769.900,603.600V607.600" stroke="#fff" stroke-width="0.700" fill="none"/></svg>
<div class="t" style="left:779.7px;top:604.2px;font-size:10.2px;line-height:14px;color:#fff;transform:scaleX(0.926);">25°C</div>
<div class="t" style="left:807.5px;top:604.2px;font-size:10.2px;line-height:14px;color:#fff;transform:scaleX(0.980);">Částeč. oblačno</div>
<svg style="left:896.5px;top:607px" width="11" height="7" viewBox="0 0 11 7"><path d="M0.6,6L5.5,1L10.4,6" fill="none" stroke="#fff" stroke-width="1.1"/></svg>
<svg style="left:914px;top:604px" width="12" height="14" viewBox="0 0 12 14"><rect x="1" y="2.6" width="6.6" height="8" rx="1.2" fill="none" stroke="#fff" stroke-width="0.9"/><path d="M7.6,5.6L10.6,4.2V9.2L7.6,7.8" fill="none" stroke="#fff" stroke-width="0.9"/><path d="M2.6,0.8H6M2.6,12.6H6" stroke="#fff" stroke-width="0.8"/><circle cx="4.3" cy="6.6" r="1.2" fill="#fff"/></svg>
<svg style="left:930px;top:605.5px" width="13" height="9" viewBox="0 0 13 9"><path d="M3,8.4C0.4,8.4 0,5.2 2.4,4.6C2.6,2.2 5.6,1 7.4,2.8C9.6,2 11.4,3.6 11,5.4C13,5.8 12.6,8.4 10.8,8.4Z" fill="#fff"/></svg>
<svg style="left:947.4px;top:605.8px" width="13" height="9.300" viewBox="0 0 14 10"><rect x="1.6" y="2.6" width="10.4" height="5.6" fill="#fff"/><rect x="12" y="4" width="1.2" height="2.8" fill="#fff"/><path d="M0.6,0.8C1.6,0 3,1 2.4,2.2L3.4,3.6" fill="none" stroke="#fff" stroke-width="0.9"/></svg>
<svg style="left:966px;top:604.5px" width="11" height="11" viewBox="0 0 11 11"><g fill="none" stroke="#fff" stroke-width="1"><path d="M0.8,10.2A9.4,9.4 0 0 1 10.2,0.8" opacity="0.6"/><path d="M3.6,10.2A6.6,6.6 0 0 1 10.2,3.6"/><path d="M6.2,10.2A4,4 0 0 1 10.2,6.2"/></g><circle cx="9.4" cy="9.6" r="1.1" fill="#fff"/></svg>
<svg style="left:981.5px;top:604.5px" width="12" height="11" viewBox="0 0 12 11"><path d="M0.8,3.8H2.8L5.6,1.2V9.8L2.8,7.2H0.8Z" fill="none" stroke="#fff" stroke-width="0.9"/><path d="M7.2,3.6C8.2,4.6 8.2,6.4 7.2,7.4M8.8,2C10.8,4 10.8,7 8.8,9" fill="none" stroke="#fff" stroke-width="0.8" opacity="0.85"/></svg>
<div class="t" style="left:1002.4px;top:598.4px;font-size:9px;line-height:13px;color:#fff;transform:scaleX(0.789);">CES</div>
<div class="t" style="left:1005.0px;top:610.5px;font-size:9px;line-height:13px;color:#fff;transform:scaleX(0.832);">CS</div>
<div class="t" style="left:1037.5px;top:598.0px;font-size:9px;line-height:13px;color:#fff;transform:scaleX(0.879);">20:33</div>
<div class="t" style="left:1027.5px;top:610.5px;font-size:9px;line-height:13px;color:#fff;transform:scaleX(0.904);">23.08.2023</div>
<svg style="left:1081px;top:604px" width="13" height="13" viewBox="0 0 13 13"><path d="M0.8,0.8H12.2V9.4H8.4L6.5,11.6L4.6,9.4H0.8Z" fill="none" stroke="#fff" stroke-width="1"/></svg>
<div class="b" style="left:1107px;top:596px;width:1px;height:29px;background:#5a6673;"></div>
</body></html>
